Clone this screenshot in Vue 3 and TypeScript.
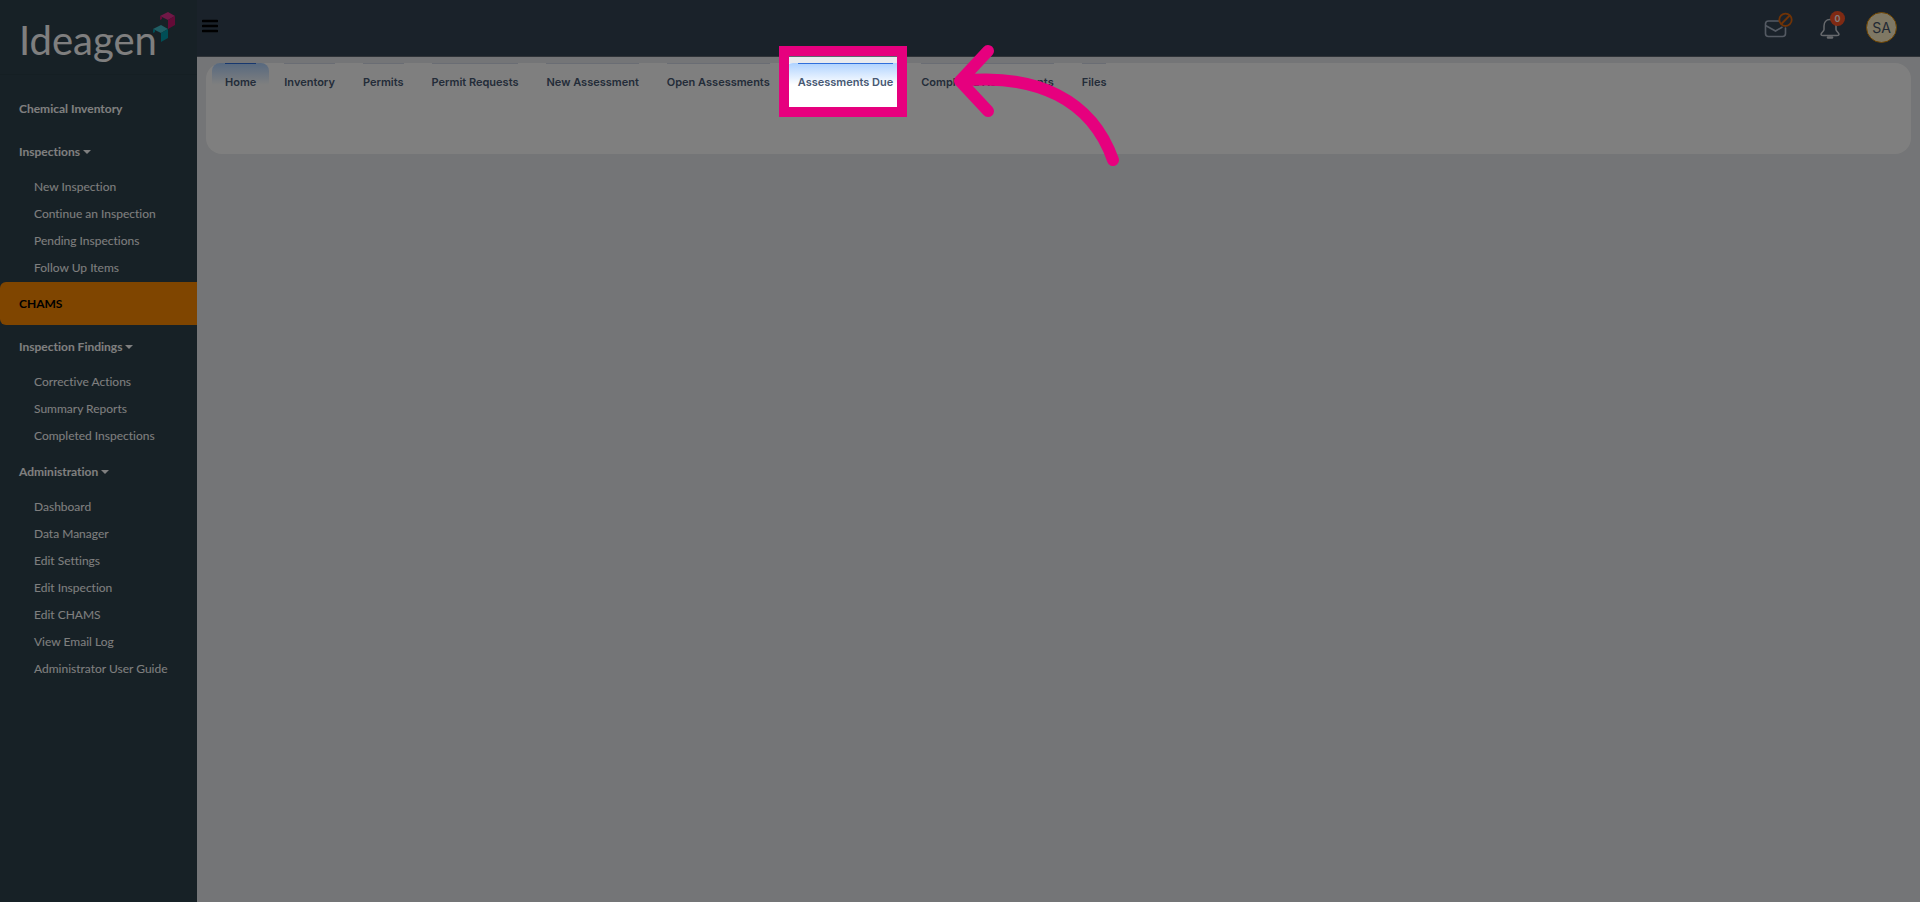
<script setup lang="ts">
interface Group {
  title: string
  expandable?: boolean
  active?: boolean
  items: string[]
}

const groups: Group[] = [
  { title: 'Chemical Inventory', items: [] },
  {
    title: 'Inspections',
    expandable: true,
    items: ['New Inspection', 'Continue an Inspection', 'Pending Inspections', 'Follow Up Items'],
  },
  { title: 'CHAMS', active: true, items: [] },
  {
    title: 'Inspection Findings',
    expandable: true,
    items: ['Corrective Actions', 'Summary Reports', 'Completed Inspections'],
  },
  {
    title: 'Administration',
    expandable: true,
    items: [
      'Dashboard',
      'Data Manager',
      'Edit Settings',
      'Edit Inspection',
      'Edit CHAMS',
      'View Email Log',
      'Administrator User Guide',
    ],
  },
]

const tabs: string[] = [
  'Home',
  'Inventory',
  'Permits',
  'Permit Requests',
  'New Assessment',
  'Open Assessments',
  'Assessments Due',
  'Completed Assessments',
  'Files',
]
const current = 'Home'
const spotlit = 'Assessments Due'
</script>

<template>
  <div class="app">
    <aside class="sidebar">
      <a class="brand" href="#" aria-label="Ideagen">
        <span class="brand-name">Ideagen</span>
        <svg class="brand-mark" width="24" height="32" viewBox="0 0 24 32" aria-hidden="true">
          <path d="M7 4 L15 0 L22 4 L15 8 Z" fill="#e0308e" />
          <path d="M15 8 L22 4 V13 L15 17 Z" fill="#c8176f" />
          <path d="M7 4 L9 5 V7 L7 8 Z" fill="#c8176f" />
          <path d="M0 17 L8 13 L15 17 L8 21 Z" fill="#40bcc8" />
          <path d="M8 21 L15 17 V26 L8 30 Z" fill="#009cac" />
          <path d="M0 17 L2 18 V20 L0 21 Z" fill="#009cac" />
        </svg>
      </a>
      <nav class="menu" aria-label="Main">
        <section v-for="g in groups" :key="g.title">
          <button v-if="g.expandable" class="heading" type="button" aria-expanded="true">
            {{ g.title }}<i class="caret"></i>
          </button>
          <a v-else class="heading" :class="{ active: g.active }" href="#">{{ g.title }}</a>
          <ul v-if="g.items.length" class="items">
            <li v-for="item in g.items" :key="item"><a href="#">{{ item }}</a></li>
          </ul>
        </section>
      </nav>
    </aside>

    <div class="main">
      <header class="topbar">
        <button class="icon-button burger" type="button" aria-label="Toggle menu">
          <svg width="16" height="14" viewBox="0 0 16 14"><path d="M1 2H15M1 7H15M1 12H15" stroke="#000" stroke-width="2.600" stroke-linecap="round" /></svg>
        </button>
        <div class="actions">
          <button class="icon-button" type="button" aria-label="Messages">
            <svg width="30" height="28" viewBox="0 0 30 28" fill="none">
              <path d="M15 9H4.500Q1.500 9 1.500 12V21.500Q1.500 24.500 4.500 24.500H18.500Q21.500 24.500 21.500 21.500V16" stroke="#a9b5c6" stroke-width="1.600" stroke-linecap="round" />
              <path d="M1.500 13.500L11.500 19L18.500 15" stroke="#a9b5c6" stroke-width="1.600" />
              <circle cx="21.500" cy="7.800" r="6.200" stroke="#e0660c" stroke-width="1.800" />
              <path d="M17.300 12L25.700 3.500" stroke="#e0660c" stroke-width="1.800" />
            </svg>
          </button>
          <button class="icon-button bell" type="button" aria-label="Notifications">
            <svg width="20" height="22" viewBox="0 0 20 22" fill="none" stroke="#ced3da" stroke-width="1.500" stroke-linejoin="round">
              <path d="M10 1.500C6 1.500 4 4.500 4 8V11.500C4 13.500 1 14.500 1 16.500C1 17.500 2 17.500 3 17.500H17C18 17.500 19 17.500 19 16.500C19 14.500 16 13.500 16 11.500V8C16 4.500 14 1.500 10 1.500Z" />
              <path d="M8 19.500H12" stroke-width="2.500" stroke-linecap="round" />
            </svg>
            <span class="badge">0</span>
          </button>
          <button class="avatar" type="button" aria-label="Account">SA</button>
        </div>
      </header>

      <main class="content">
        <nav class="panel" aria-label="Chemical assessments">
          <a
            v-for="tab in tabs"
            :key="tab"
            class="tab"
            :class="{ current: tab === current, spotlit: tab === spotlit }"
            href="#"
          >
            <span class="tab-label">{{ tab }}</span>
            <span v-if="tab === spotlit" class="spotlight">
              <svg class="arrow" width="170" height="130" viewBox="0 0 170 130" fill="none" aria-hidden="true">
                <path d="M36 11L8 41L36 71M8 41C85 33 140 60 161 120" stroke="#e6007e" stroke-width="12" stroke-linecap="round" stroke-linejoin="round" />
              </svg>
            </span>
          </a>
        </nav>
      </main>
    </div>
  </div>
</template>

<style>
body {
  margin: 0;
  background: #e9ebee;
}
</style>

<style scoped>
.app {
  display: flex;
  min-height: 100vh;
  overflow: hidden;
  background: #e9ebee;
  font-family: Lato, sans-serif;
  font-variant-ligatures: none;
}
a {
  color: inherit;
  text-decoration: none;
}
button {
  padding: 0;
  border: 0;
  background: none;
  font: inherit;
  color: inherit;
  cursor: pointer;
}
.sidebar {
  flex: 0 0 197px;
  background: #2e424c;
  color: #fff;
}
.brand {
  display: flex;
  box-sizing: border-box;
  height: 75px;
  padding: 12px 0 0 19px;
  border-bottom: 1px solid #2b3e47;
}
.brand-name {
  padding-top: 5px;
  font-size: 40px;
  line-height: 46px;
  font-weight: 400;
}
.brand-mark {
  margin-left: -4px;
}
.menu {
  padding-top: 12px;
}
.heading {
  display: flex;
  box-sizing: border-box;
  align-items: center;
  gap: 3px;
  width: 100%;
  height: 43px;
  padding-left: 19px;
  font-size: 12px;
  font-weight: 700;
}
.active {
  border-radius: 6px 0 0 6px;
  background: #ff8a00;
  color: #000;
}
.caret {
  border: 4px solid transparent;
  border-top-color: currentColor;
  border-bottom: 0;
}
.items {
  margin: 0;
  padding: 0 0 1px 34px;
  list-style: none;
  font-size: 12px;
  line-height: 27px;
}
.main {
  flex: 1;
  min-width: 0;
}
.topbar {
  display: flex;
  box-sizing: border-box;
  justify-content: space-between;
  height: 57px;
  padding: 0 23px 0 5px;
  border-bottom: 1px solid #5e6670;
  background: #354554;
}
.icon-button {
  display: flex;
}
.burger {
  padding-top: 19px;
}
.actions {
  display: flex;
  align-items: flex-start;
  padding-top: 12px;
}
.bell {
  position: relative;
  margin: 6px 26px 0 26px;
}
.badge {
  position: absolute;
  top: -7px;
  left: 10px;
  width: 15px;
  height: 15px;
  border-radius: 50%;
  background: #ff5426;
  color: #fff;
  font: 600 9px/15px Inter, sans-serif;
  text-align: center;
}
.avatar {
  width: 31px;
  height: 31px;
  border: 1px solid #e08a00;
  border-radius: 50%;
  background: #fff0c8;
  color: #44546a;
  font: 400 14px Inter, sans-serif;
}
.content {
  padding: 6px 9px;
}
.panel {
  display: flex;
  align-items: flex-start;
  gap: 2px;
  box-sizing: border-box;
  height: 91px;
  padding-left: 6px;
  border-radius: 16px;
  background: #fff;
  font-family: Inter, sans-serif;
}
.tab {
  position: relative;
  padding: 0 13px;
  border-radius: 8px 8px 0 0;
  color: #475872;
  font-size: 11px;
  font-weight: 600;
  white-space: nowrap;
}
.tab-label {
  display: block;
  border-top: 1px solid #d5dbe8;
  line-height: 36px;
}
.current,
.spotlit {
  background: linear-gradient(#aed2ff, #fff 22px);
}
.current .tab-label,
.spotlit .tab-label {
  border-color: #2f6fdc;
}
.spotlight {
  position: absolute;
  z-index: 10;
  top: -7px;
  bottom: -7px;
  left: 4px;
  right: 9px;
  box-shadow: 0 0 0 10px #e6007e, 0 0 0 2000px rgba(0, 0, 0, 0.5);
}
.arrow {
  position: absolute;
  top: -16px;
  left: 163px;
}
</style>
